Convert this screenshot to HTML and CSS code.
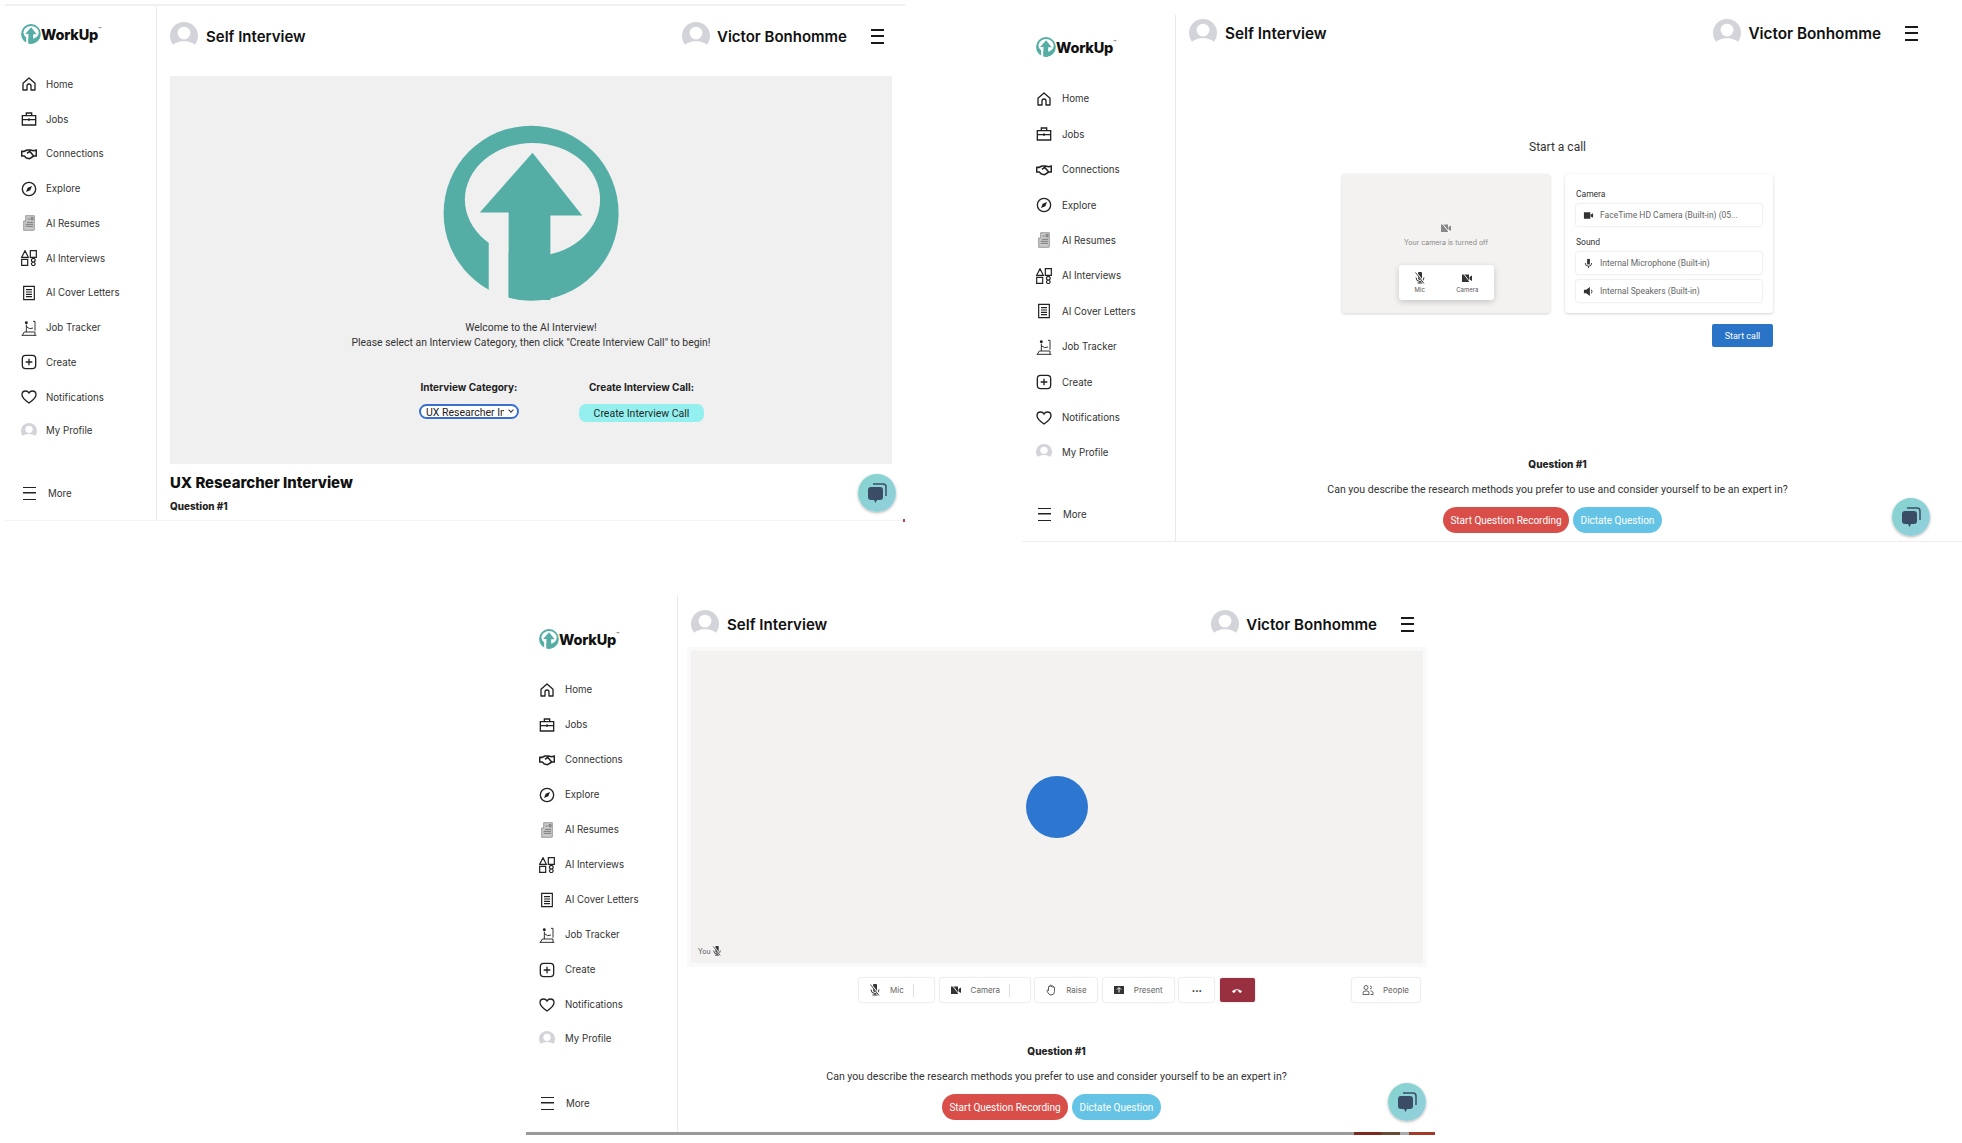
FILE: index.html
```html
<!DOCTYPE html>
<html lang="en">
<head>
    <meta charset="UTF-8">
    <meta name="viewport" content="width=device-width, initial-scale=1.0">
    <title>WorkUp Self Interview</title>
    <link rel="stylesheet" href="styles.css">
</head>
<body>
    <!-- shared icons -->
    <svg class="icon-defs" aria-hidden="true">
        <symbol id="i-logo" viewBox="22 14 178 178">
            <circle cx="110.6" cy="102.7" r="88" fill="#55aea6"/>
            <ellipse cx="112" cy="89" rx="68" ry="57" style="fill: var(--hole)"/>
            <rect x="68" y="125" width="20" height="70" style="fill: var(--hole)"/>
            <path d="M112 42 162 105H130V190H100L88 187V102H59Z" fill="#55aea6"/>
        </symbol>
        <symbol id="i-home" viewBox="0 0 24 24"><path d="M3 11 12 3l9 8v10h-6v-6a3 3 0 0 0-6 0v6H3Z" fill="none" stroke="currentColor" stroke-width="2" stroke-linejoin="round"/></symbol>
        <symbol id="i-jobs" viewBox="0 0 24 24"><path d="M2 7h20v14H2ZM8 7V3h8v4M2 13h20M12 11v4" fill="none" stroke="currentColor" stroke-width="2"/></symbol>
        <symbol id="i-connect" viewBox="0 0 24 24"><path d="M1 8h4l4-2 5 0 5 1 4-1v9h-4l-6 4-5-1-3-3H1ZM9 11l4-3 6 7" fill="none" stroke="currentColor" stroke-width="2.4" stroke-linejoin="round"/></symbol>
        <symbol id="i-explore" viewBox="0 0 24 24"><circle cx="12" cy="12" r="10" fill="none" stroke="currentColor" stroke-width="2"/><path d="M16.5 7.5 14 14l-6.500 2.500L10 10Z" fill="currentColor"/></symbol>
        <symbol id="i-resume" viewBox="0 0 24 24"><path d="M7 1h13v21a1 1 0 0 1-1 1H4V9h3Z" fill="#c9c9c9" stroke="#777" stroke-width="1"/><path d="M10 6h3M15 4h3v3h-3ZM9 11h9M7 14h11M7 17h11" fill="none" stroke="#666" stroke-width="1.200"/></symbol>
        <symbol id="i-shapes" viewBox="0 0 24 24"><path d="M6 1 1 11h10ZM14 1h9v10h-9ZM1 14h9v9H1ZM18.500 12.500a2.800 2.800 0 1 1-.1 0ZM18.500 18a2.700 2.700 0 1 1-.1 0" fill="none" stroke="currentColor" stroke-width="1.800"/></symbol>
        <symbol id="i-doc" viewBox="0 0 24 24"><path d="M4 2h16v20H4ZM7.500 7h9M7.500 10.500h9M7.500 14h9M7.500 17.500h9" fill="none" stroke="currentColor" stroke-width="1.800"/></symbol>
        <symbol id="i-tracker" viewBox="0 0 24 24"><path d="M1 23h22M2 23l3-5h16v5M8 7v11M8 10l5 3 5-1M21 2v14M18 2h3" fill="none" stroke="currentColor" stroke-width="1.400"/><circle cx="8" cy="4" r="2.200" fill="currentColor"/></symbol>
        <symbol id="i-create" viewBox="0 0 24 24"><rect x="2" y="2" width="20" height="20" rx="5" fill="none" stroke="currentColor" stroke-width="2"/><path d="M12 7v10M7 12h10" stroke="currentColor" stroke-width="2"/></symbol>
        <symbol id="i-heart" viewBox="0 0 24 24"><path d="M12 21C5 16 1.500 12.500 1.500 8.500 1.500 5 4 3 7 3c2.200 0 4 1 5 3 1-2 2.800-3 5-3 3 0 5.500 2 5.500 5.500 0 4-3.500 7.500-10.500 12.500Z" fill="none" stroke="currentColor" stroke-width="2"/></symbol>
        <symbol id="i-avatar" viewBox="0 0 24 24"><circle cx="12" cy="12" r="12" fill="#d3d4da"/><circle cx="12" cy="9.500" r="5.500" fill="#fff"/><path d="M0 24v-2c3-4 8-5.500 12-5.500s9 1.500 12 5.500v2Z" fill="#fff"/></symbol>
        <symbol id="i-mic-off" viewBox="0 0 24 24"><path d="M8 3a4 4 0 0 1 8 0v9a4 4 0 0 1-8 0Z" fill="currentColor"/><path d="M4 11a8 8 0 0 0 16 0M12 19v3M7 22h10" fill="none" stroke="currentColor" stroke-width="2"/><path d="M4 1l17 22" stroke="#fff" stroke-width="3.500"/><path d="M3 1l17 22" stroke="currentColor" stroke-width="1.800"/></symbol>
        <symbol id="i-cam-off" viewBox="0 0 24 24"><path d="M2 5h14v15H2ZM17 10l5-3v11l-5-3Z" fill="currentColor"/><path d="M4 2l16 21" stroke="#fff" stroke-width="1.800"/></symbol>
        <symbol id="i-chat" viewBox="0 0 24 24"><path d="M8 3h10a3 3 0 0 1 3 3v9" fill="none" stroke="#3b4d66" stroke-width="1.500"/><path d="M6 6h9a3 3 0 0 1 3 3v7a3 3 0 0 1-3 3h-3l-1.500 3L9 19H6a3 3 0 0 1-3-3V9a3 3 0 0 1 3-3Z" fill="#3b4d66"/></symbol>
    </svg>

    <!-- window 1: interview category -->
    <section class="window win-one">
        <aside class="sidebar">
            <div class="brand"><svg class="brand-mark"><use href="#i-logo"/></svg><span>WorkUp</span><sup>™</sup></div>
            <ul class="nav">
                <li><svg class="nav-icon"><use href="#i-home"/></svg>Home</li>
                <li><svg class="nav-icon"><use href="#i-jobs"/></svg>Jobs</li>
                <li><svg class="nav-icon"><use href="#i-connect"/></svg>Connections</li>
                <li><svg class="nav-icon"><use href="#i-explore"/></svg>Explore</li>
                <li><svg class="nav-icon"><use href="#i-resume"/></svg>AI Resumes</li>
                <li><svg class="nav-icon"><use href="#i-shapes"/></svg>AI Interviews</li>
                <li><svg class="nav-icon"><use href="#i-doc"/></svg>AI Cover Letters</li>
                <li><svg class="nav-icon"><use href="#i-tracker"/></svg>Job Tracker</li>
                <li><svg class="nav-icon"><use href="#i-create"/></svg>Create</li>
                <li><svg class="nav-icon"><use href="#i-heart"/></svg>Notifications</li>
                <li class="nav-profile"><svg class="nav-icon"><use href="#i-avatar"/></svg>My Profile</li>
            </ul>
            <div class="nav-more"><span class="burger-thin"></span>More</div>
        </aside>
        <main class="content">
            <header class="topbar">
                <svg class="avatar"><use href="#i-avatar"/></svg>
                <h1 class="topbar-title">Self Interview</h1>
                <svg class="avatar topbar-user"><use href="#i-avatar"/></svg>
                <span class="user-name">Victor Bonhomme</span>
                <span class="burger"></span>
            </header>
            <div class="welcome">
                <svg class="welcome-logo"><use href="#i-logo"/></svg>
                <p class="welcome-text">Welcome to the AI Interview!<br>Please select an Interview Category, then click "Create Interview Call" to begin!</p>
                <div class="picks">
                    <div class="pick pick-category">
                        <label class="pick-label">Interview Category:</label>
                        <span class="select-wrap"><select class="category-select"><option>UX Researcher Interview</option></select></span>
                    </div>
                    <div class="pick pick-create">
                        <span class="pick-label">Create Interview Call:</span>
                        <button class="create-btn">Create Interview Call</button>
                    </div>
                </div>
            </div>
            <h2 class="interview-title">UX Researcher Interview</h2>
            <h3 class="question-small">Question #1</h3>
        </main>
        <button class="chat-fab"><svg><use href="#i-chat"/></svg></button>
    </section>

    <!-- window 2: start a call -->
    <section class="window win-two">
        <aside class="sidebar">
            <div class="brand"><svg class="brand-mark"><use href="#i-logo"/></svg><span>WorkUp</span><sup>™</sup></div>
            <ul class="nav">
                <li><svg class="nav-icon"><use href="#i-home"/></svg>Home</li>
                <li><svg class="nav-icon"><use href="#i-jobs"/></svg>Jobs</li>
                <li><svg class="nav-icon"><use href="#i-connect"/></svg>Connections</li>
                <li><svg class="nav-icon"><use href="#i-explore"/></svg>Explore</li>
                <li><svg class="nav-icon"><use href="#i-resume"/></svg>AI Resumes</li>
                <li><svg class="nav-icon"><use href="#i-shapes"/></svg>AI Interviews</li>
                <li><svg class="nav-icon"><use href="#i-doc"/></svg>AI Cover Letters</li>
                <li><svg class="nav-icon"><use href="#i-tracker"/></svg>Job Tracker</li>
                <li><svg class="nav-icon"><use href="#i-create"/></svg>Create</li>
                <li><svg class="nav-icon"><use href="#i-heart"/></svg>Notifications</li>
                <li class="nav-profile"><svg class="nav-icon"><use href="#i-avatar"/></svg>My Profile</li>
            </ul>
            <div class="nav-more"><span class="burger-thin"></span>More</div>
        </aside>
        <main class="content">
            <header class="topbar">
                <svg class="avatar"><use href="#i-avatar"/></svg>
                <h1 class="topbar-title">Self Interview</h1>
                <svg class="avatar topbar-user"><use href="#i-avatar"/></svg>
                <span class="user-name">Victor Bonhomme</span>
                <span class="burger"></span>
            </header>
            <p class="call-title">Start a call</p>
            <div class="call-setup">
                <div class="preview">
                    <svg class="preview-cam"><use href="#i-cam-off"/></svg>
                    <span class="preview-text">Your camera is turned off</span>
                    <div class="preview-controls">
                        <span class="preview-control"><svg><use href="#i-mic-off"/></svg>Mic</span>
                        <span class="preview-control"><svg><use href="#i-cam-off"/></svg>Camera</span>
                    </div>
                </div>
                <div class="devices">
                    <span class="device-label">Camera</span>
                    <div class="device"><svg viewBox="0 0 24 24"><path d="M2 5h14v14H2ZM17 10l5-3v10l-5-3Z" fill="currentColor"/></svg>FaceTime HD Camera (Built-in) (05...</div>
                    <span class="device-label device-label-sound">Sound</span>
                    <div class="device"><svg viewBox="0 0 24 24"><path d="M9 2h6v12H9Z" fill="currentColor"/><path d="M5 11a7 7 0 0 0 14 0M12 18v4" fill="none" stroke="currentColor" stroke-width="2"/></svg>Internal Microphone (Built-in)</div>
                    <div class="device"><svg viewBox="0 0 24 24"><path d="M2 8h5l8-6v20l-8-6H2Z" fill="currentColor"/><path d="M18 8a6 6 0 0 1 0 8" fill="none" stroke="currentColor" stroke-width="2"/></svg>Internal Speakers (Built-in)</div>
                </div>
            </div>
            <div class="call-start"><button class="start-btn">Start call</button></div>
            <div class="question">
                <h3 class="question-title">Question #1</h3>
                <p class="question-text">Can you describe the research methods you prefer to use and consider yourself to be an expert in?</p>
                <div class="question-actions">
                    <button class="pill pill-red">Start Question Recording</button>
                    <button class="pill pill-blue">Dictate Question</button>
                </div>
            </div>
        </main>
        <button class="chat-fab"><svg><use href="#i-chat"/></svg></button>
    </section>

    <!-- window 3: in call -->
    <section class="window win-three">
        <aside class="sidebar">
            <div class="brand"><svg class="brand-mark"><use href="#i-logo"/></svg><span>WorkUp</span><sup>™</sup></div>
            <ul class="nav">
                <li><svg class="nav-icon"><use href="#i-home"/></svg>Home</li>
                <li><svg class="nav-icon"><use href="#i-jobs"/></svg>Jobs</li>
                <li><svg class="nav-icon"><use href="#i-connect"/></svg>Connections</li>
                <li><svg class="nav-icon"><use href="#i-explore"/></svg>Explore</li>
                <li><svg class="nav-icon"><use href="#i-resume"/></svg>AI Resumes</li>
                <li><svg class="nav-icon"><use href="#i-shapes"/></svg>AI Interviews</li>
                <li><svg class="nav-icon"><use href="#i-doc"/></svg>AI Cover Letters</li>
                <li><svg class="nav-icon"><use href="#i-tracker"/></svg>Job Tracker</li>
                <li><svg class="nav-icon"><use href="#i-create"/></svg>Create</li>
                <li><svg class="nav-icon"><use href="#i-heart"/></svg>Notifications</li>
                <li class="nav-profile"><svg class="nav-icon"><use href="#i-avatar"/></svg>My Profile</li>
            </ul>
            <div class="nav-more"><span class="burger-thin"></span>More</div>
        </aside>
        <main class="content">
            <header class="topbar">
                <svg class="avatar"><use href="#i-avatar"/></svg>
                <h1 class="topbar-title">Self Interview</h1>
                <svg class="avatar topbar-user"><use href="#i-avatar"/></svg>
                <span class="user-name">Victor Bonhomme</span>
                <span class="burger"></span>
            </header>
            <div class="stage-frame">
                <div class="stage">
                    <span class="stage-dot"></span>
                    <span class="stage-you">You <svg><use href="#i-mic-off"/></svg></span>
                </div>
            </div>
            <div class="toolbar">
                <span class="tool tool-mic"><svg><use href="#i-mic-off"/></svg><b>Mic</b><i class="tool-sep"></i></span>
                <span class="tool tool-camera"><svg><use href="#i-cam-off"/></svg><b>Camera</b><i class="tool-sep"></i></span>
                <span class="tool tool-raise"><svg viewBox="0 0 24 24"><path d="M7 13V6a1.500 1.500 0 0 1 3 0V3.500a1.500 1.500 0 0 1 3 0V5a1.500 1.500 0 0 1 3 0v2a1.500 1.500 0 0 1 3 0v8a7 7 0 0 1-7 7c-3 0-5-2-8-8a1.500 1.500 0 0 1 3-1Z" fill="none" stroke="currentColor" stroke-width="1.600"/></svg><b>Raise</b></span>
                <span class="tool tool-present"><svg viewBox="0 0 24 24"><path d="M2 4h20v16H2Z" fill="currentColor"/><path d="M12 17V8M8 11l4-4 4 4" fill="none" stroke="#fff" stroke-width="2"/></svg><b>Present</b></span>
                <span class="tool tool-dots">•••</span>
                <span class="tool tool-end"><svg viewBox="0 0 24 24"><path d="M2 15c5-6 15-6 20 0l-3 3-4-2v-3c-2-.7-4-.7-6 0v3l-4 2Z" fill="#fff"/></svg></span>
                <span class="tool tool-people"><svg viewBox="0 0 24 24"><circle cx="8" cy="7" r="4" fill="none" stroke="currentColor" stroke-width="1.500"/><path d="M2 21v-3a4 4 0 0 1 4-4h4a4 4 0 0 1 4 4v3ZM16 4a3 3 0 0 1 0 6M17 14a4 4 0 0 1 5 4v3h-5" fill="none" stroke="currentColor" stroke-width="1.500"/></svg><b>People</b></span>
            </div>
            <div class="question">
                <h3 class="question-title">Question #1</h3>
                <p class="question-text">Can you describe the research methods you prefer to use and consider yourself to be an expert in?</p>
                <div class="question-actions">
                    <button class="pill pill-red">Start Question Recording</button>
                    <button class="pill pill-blue">Dictate Question</button>
                </div>
            </div>
        </main>
        <button class="chat-fab"><svg><use href="#i-chat"/></svg></button>
    </section>
</body>
</html>
```
FILE: styles.css
```css
body {
    margin: 0;
    width: 1962px;
    height: 1143px;
    overflow: hidden;
    position: relative;
    background: #fff;
    color: #1b1b1b;
    font-family: "Inter", "Liberation Sans", sans-serif;
}
.icon-defs {
    position: absolute;
    width: 0;
    height: 0;
}
h1, h2, h3, p, ul {
    margin: 0;
    padding: 0;
}
button {
    font-family: "Roboto", "Liberation Sans", sans-serif;
    border: 0;
    cursor: pointer;
}

/* the three screens sit on a free canvas */
.window {
    --hole: #fff;
    --side: 152px;
    --pad: 16px;
    --brand-top: 18px;
    --nav-top: 61px;
    --step: 34.75px;
    --nav-gap: 9px;
    --head-font: 15px;
    position: absolute;
    display: grid;
    grid-template-columns: var(--side) 1fr;
    background: #fff;
}
.win-one {
    left: 5px;
    top: 4px;
    width: 900px;
    height: 517px;
    border-top: 2px solid #f0f0f2;
    border-bottom: 1px solid #f3f3f3;
    box-sizing: border-box;
}
.win-one::after {
    content: "";
    position: absolute;
    right: 0;
    bottom: -2px;
    width: 2px;
    height: 3px;
    background: #b5483c;
}
.win-two {
    --side: 154px;
    --pad: 14px;
    --brand-top: 22px;
    --nav-top: 66px;
    --step: 35.45px;
    --nav-gap: 10px;
    --head-font: 15.3px;
    left: 1022px;
    top: 15px;
    width: 940px;
    height: 527px;
    border-bottom: 1px solid #eee;
    box-sizing: border-box;
}
.win-three {
    --side: 152px;
    --pad: 13px;
    --brand-top: 34px;
    --nav-top: 77px;
    --step: 35.05px;
    --nav-gap: 10px;
    --head-font: 15.1px;
    left: 526px;
    top: 595px;
    width: 909px;
    height: 540px;
    border-bottom: 3px solid;
    border-image: linear-gradient(90deg, #999 0 91%, #7c2a20 91% 94%, #6b4a35 94% 96%, #aaa 96% 97%, #a33a25 97%) 1;
    box-sizing: border-box;
}

/* sidebar */
.sidebar {
    display: flex;
    flex-direction: column;
    padding-left: var(--pad);
    border-right: 1px solid #e9e9e9;
}
.brand {
    display: flex;
    align-items: center;
    height: 20px;
    margin-top: var(--brand-top);
    font-size: 14.5px;
    font-weight: 800;
    letter-spacing: -0.2px;
    color: #111;
}
.brand-mark {
    width: 20px;
    height: 20px;
    flex: none;
}
.brand sup {
    font-size: 5px;
    font-weight: 400;
    align-self: flex-start;
    margin-top: 2px;
}
.nav {
    list-style: none;
    margin-top: calc(var(--nav-top) - var(--brand-top) - 20px);
}
.nav li {
    display: flex;
    align-items: center;
    gap: var(--nav-gap);
    height: var(--step);
    font-size: 9.7px;
    color: #333;
}
.nav-icon {
    width: 16px;
    height: 16px;
    flex: none;
    color: #222;
}
.nav .nav-profile {
    margin-top: -1px;
}
.nav-more {
    display: flex;
    align-items: center;
    gap: 12px;
    margin-top: auto;
    margin-bottom: 19px;
    height: 16px;
    font-size: 9.7px;
    color: #333;
}
.burger-thin {
    width: 13px;
    height: 11px;
    margin-left: 2px;
    border-top: 1.5px solid #222;
    border-bottom: 1.5px solid #222;
    background: linear-gradient(#222, #222) center / 100% 1.5px no-repeat;
}
.win-three .nav-more {
    margin-bottom: 21px;
}

/* main column */
.content {
    display: flex;
    flex-direction: column;
    min-width: 0;
}
.topbar {
    display: flex;
    align-items: center;
    flex: none;
    padding: 0 21px 0 13px;
    height: 62px;
    box-sizing: border-box;
}
.avatar {
    width: 28px;
    height: 28px;
    flex: none;
}
.topbar-title {
    margin-left: 8px;
    font-size: var(--head-font);
    font-weight: 600;
    color: #111;
}
.topbar-user {
    margin-left: auto;
}
.user-name {
    margin-left: 7px;
    font-size: var(--head-font);
    font-weight: 600;
    color: #111;
}
.burger {
    width: 13px;
    height: 11px;
    margin-left: 24px;
    border-top: 2px solid #1a1a1a;
    border-bottom: 2px solid #1a1a1a;
    background: linear-gradient(#1a1a1a, #1a1a1a) center / 100% 2px no-repeat;
}

/* window 1 */
.win-one .topbar {
    height: 64px;
    margin-top: -2px;
}
.welcome {
    display: flex;
    flex-direction: column;
    align-items: center;
    height: 388px;
    box-sizing: border-box;
    margin: 8px 13px 0;
    padding-top: 49px;
    background: #f0f0f0;
    --hole: #f0f0f0;
}
.welcome-logo {
    width: 177px;
    height: 177px;
    flex: none;
}
.welcome-text {
    margin-top: 19px;
    font-family: "Roboto", "Liberation Sans", sans-serif;
    font-size: 10.4px;
    line-height: 14.5px;
    text-align: center;
    color: #333;
}
.picks {
    display: flex;
    gap: 60px;
    margin-top: 30px;
    margin-left: 61px;
}
.pick {
    display: flex;
    flex-direction: column;
    align-items: center;
    gap: 10px;
}
.pick-category {
    width: 100px;
}
.pick-create {
    width: 125px;
}
.pick-label {
    font-size: 10px;
    font-weight: 700;
    line-height: 14px;
    white-space: nowrap;
    color: #222;
}
.select-wrap {
    position: relative;
    display: block;
    height: 15px;
}
.select-wrap::after {
    content: "";
    position: absolute;
    right: 6px;
    top: 4px;
    width: 3px;
    height: 3px;
    border-right: 1px solid #333;
    border-bottom: 1px solid #333;
    transform: rotate(45deg);
}
.category-select {
    appearance: none;
    display: block;
    width: 100px;
    height: 15px;
    padding: 0 13px 0 5px;
    border: 2px solid #3a6fcf;
    border-radius: 8px;
    background: #fff;
    font-family: "Roboto", "Liberation Sans", sans-serif;
    font-size: 10.5px;
    color: #222;
}
.create-btn {
    width: 125px;
    height: 18px;
    border-radius: 7px;
    background: #93f0ee;
    font-size: 10.5px;
    color: #1f2a2a;
}
.interview-title {
    margin: 9px 13px 0;
    font-size: 14.9px;
    font-weight: 800;
    line-height: 20px;
    color: #111;
}
.question-small {
    margin: 7px 13px 0;
    font-size: 9.9px;
    font-weight: 800;
    color: #222;
}

/* window 2 */
.win-two .content {
    padding-right: 23px;
}
.win-two .topbar {
    height: 36px;
    padding-right: 44px;
    margin-right: -23px;
}
.call-title {
    margin-top: 89px;
    text-align: center;
    font-family: "Roboto", "Liberation Sans", sans-serif;
    font-size: 12px;
    line-height: 14px;
    color: #333;
}
.call-setup {
    display: grid;
    grid-template-columns: 208px 208px;
    gap: 15px;
    justify-content: center;
    margin-top: 20px;
}
.preview,
.devices {
    height: 139px;
    box-sizing: border-box;
    border-radius: 3px;
    box-shadow: 0 1px 3px rgba(0, 0, 0, 0.18);
}
.preview {
    display: flex;
    flex-direction: column;
    align-items: center;
    padding-top: 48px;
    background: #f3f2f1;
}
.preview-cam {
    width: 12px;
    height: 12px;
    color: #888;
}
.preview-text {
    margin-top: 4px;
    font-size: 7px;
    line-height: 10px;
    color: #888;
}
.preview-controls {
    display: flex;
    justify-content: space-around;
    align-items: center;
    width: 95px;
    height: 35px;
    margin-top: 17px;
    border-radius: 3px;
    background: #fff;
    box-shadow: 0 2px 6px rgba(0, 0, 0, 0.18);
}
.preview-control {
    display: flex;
    flex-direction: column;
    align-items: center;
    gap: 2px;
    font-size: 6px;
    color: #555;
}
.preview-control svg {
    width: 12px;
    height: 12px;
    color: #333;
}
.devices {
    padding: 15px 11px;
    background: #fff;
}
.device-label {
    display: block;
    font-family: "Roboto", "Liberation Sans", sans-serif;
    font-size: 8.5px;
    line-height: 10px;
    color: #333;
}
.device-label-sound {
    margin-top: 11px;
}
.device {
    display: flex;
    align-items: center;
    gap: 6px;
    height: 22px;
    margin-top: 5px;
    padding-left: 7px;
    box-sizing: border-box;
    border-radius: 2px;
    box-shadow: 0 0 2px rgba(0, 0, 0, 0.22);
    font-family: "Roboto", "Liberation Sans", sans-serif;
    font-size: 8.5px;
    color: #666;
}
.device + .device {
    margin-top: 6px;
}
.device svg {
    width: 11px;
    height: 11px;
    color: #333;
    flex: none;
}
.call-start {
    display: flex;
    justify-content: flex-end;
    width: 431px;
    margin: 11px auto 0;
}
.start-btn {
    width: 61px;
    height: 23px;
    border-radius: 2px;
    background: #2a74c8;
    font-size: 9px;
    color: #fff;
}
.question {
    display: flex;
    flex-direction: column;
    align-items: center;
}
.win-two .question {
    margin-top: 110px;
}
.question-title {
    font-size: 10px;
    font-weight: 800;
    line-height: 14px;
    color: #222;
}
.question-text {
    margin-top: 12px;
    font-family: "Roboto", "Liberation Sans", sans-serif;
    font-size: 10.6px;
    line-height: 14px;
    color: #333;
}
.question-actions {
    display: flex;
    gap: 4px;
    margin: 10px 10px 0 0;
}
.pill {
    height: 26px;
    border-radius: 13px;
    font-size: 10px;
    color: #fff;
}
.pill-red {
    width: 126px;
    background: #d94e49;
}
.pill-blue {
    width: 89px;
    background: #65c4e5;
}

/* window 3 */
.win-three .topbar {
    height: 52px;
    padding-top: 6px;
}
.stage-frame {
    margin-right: 8px;
    margin-left: 9px;
    padding: 4px;
    background: #f9f9f9;
}
.stage {
    position: relative;
    display: flex;
    align-items: center;
    justify-content: center;
    height: 312px;
    background: #f3f2f1;
}
.stage-dot {
    width: 62px;
    height: 62px;
    border-radius: 50%;
    background: #2e77d0;
}
.stage-you {
    position: absolute;
    left: 7px;
    bottom: 7px;
    display: flex;
    align-items: center;
    gap: 1px;
    font-size: 7px;
    color: #555;
}
.stage-you svg {
    width: 10px;
    height: 10px;
    color: #333;
}
.toolbar {
    display: flex;
    gap: 5.6px;
    height: 24px;
    margin-top: 11px;
    padding: 0 15px 0 181px;
}
.tool {
    display: flex;
    align-items: center;
    gap: 9px;
    box-sizing: border-box;
    padding-left: 10px;
    border-radius: 2px;
    box-shadow: 0 0 2px rgba(0, 0, 0, 0.25);
    font-size: 8px;
    color: #666;
}
.tool b {
    font-weight: 400;
}
.tool svg {
    width: 12px;
    height: 12px;
    flex: none;
    color: #333;
}
.tool-sep {
    width: 1px;
    height: 13px;
    margin-left: 0;
    background: #ddd;
}
.tool-mic { width: 75px; }
.tool-camera { width: 90px; }
.tool-raise { width: 62px; }
.tool-present { width: 71px; }
.tool-dots {
    width: 35px;
    padding: 0;
    justify-content: center;
    font-size: 6px;
    color: #222;
}
.tool-end {
    width: 35px;
    padding: 0;
    justify-content: center;
    background: #98303f;
}
.tool-people {
    width: 68px;
    margin-left: auto;
}
.win-three .question {
    margin-top: 42px;
}

/* floating chat button */
.chat-fab {
    position: absolute;
    right: 9px;
    bottom: 8px;
    width: 38px;
    height: 38px;
    padding: 0;
    display: flex;
    align-items: center;
    justify-content: center;
    border-radius: 50%;
    background: linear-gradient(135deg, #85d4cf, #93cfdc);
    box-shadow: 0 1px 3px rgba(0, 0, 0, 0.3);
}
.chat-fab svg {
    width: 24px;
    height: 24px;
}
.win-two .chat-fab {
    right: 32px;
    bottom: 5px;
}
.win-three .chat-fab {
    right: 9px;
    bottom: 11px;
}
```
